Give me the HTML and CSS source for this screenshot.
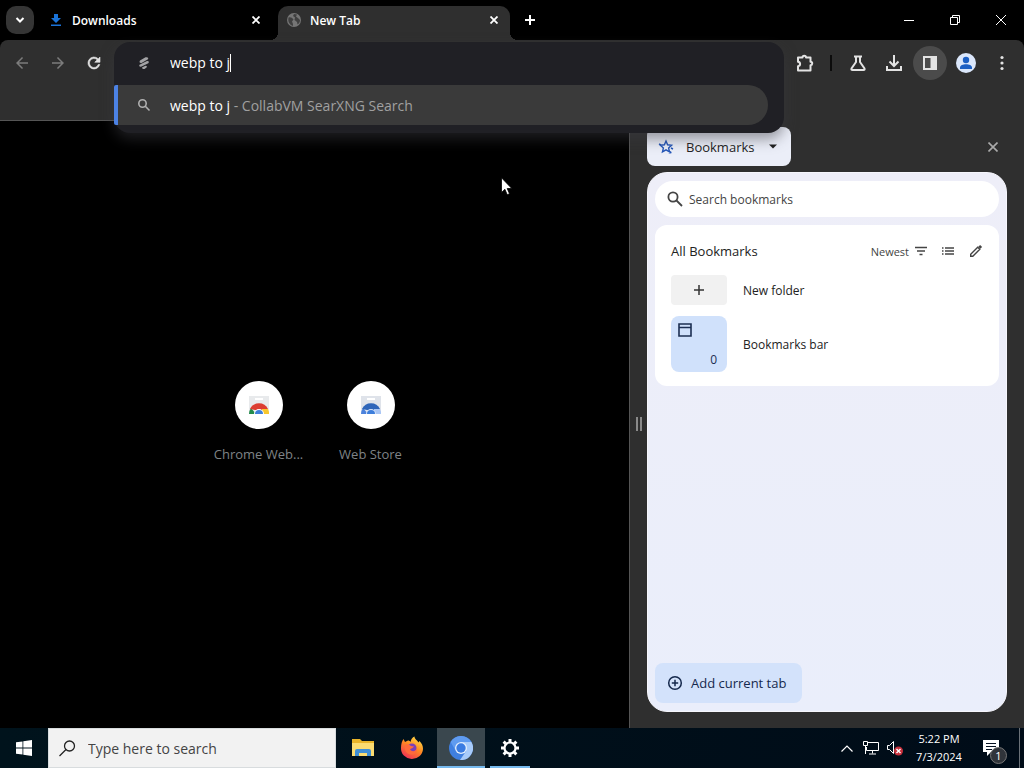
FILE: index.html
```html
<!DOCTYPE html>
<html lang="en">
<head>
    <meta charset="UTF-8">
    <meta name="viewport" content="width=device-width, initial-scale=1.0">
    <title>New Tab</title>
    <link rel="stylesheet" href="styles.css">
</head>
<body>
<div class="desktop">
    <div class="browser">
        <!-- tab strip and window buttons -->
        <header class="tabstrip">
            <button class="tab-search" aria-label="Search tabs">
                <svg width="10" height="10" viewBox="0 0 10 10" fill="none" stroke="#fff" stroke-width="2"><path d="M1.5 3 5 6.5 8.5 3"/></svg>
            </button>
            <div class="tab">
                <svg width="16" height="16" viewBox="0 0 16 16" fill="#1a73d8"><path d="M6 2h4v4h3l-5 5-5-5h3zM3 12.500h10v1.500H3z"/></svg>
                <span class="tab-title">Downloads</span>
                <button class="tab-close" aria-label="Close Downloads"><svg width="8" height="8" viewBox="0 0 8 8" stroke="#fff" stroke-width="1.800"><path d="M.5.5l7 7M7.500.5l-7 7"/></svg></button>
            </div>
            <div class="tab active">
                <svg width="16" height="16" viewBox="0 0 16 16"><circle cx="8" cy="8" r="7" fill="#757575"/><path d="M2.500 5.500C5 5 6 6 7.500 7.500L6 9.500 7 12v2C4 13 1.500 10 2.500 5.500zM8 2l3 .5-1 2 2.500 2L14 8c0 2-1 3.500-2.500 4.500L11 10 8.500 8 9 5.500 7 4z" fill="#404040"/></svg>
                <span class="tab-title">New Tab</span>
                <button class="tab-close" aria-label="Close New Tab"><svg width="8" height="8" viewBox="0 0 8 8" stroke="#fff" stroke-width="1.800"><path d="M.5.5l7 7M7.500.5l-7 7"/></svg></button>
            </div>
            <button class="new-tab" aria-label="New tab">
                <svg width="12" height="12" viewBox="0 0 12 12" stroke="#fff" stroke-width="2"><path d="M6 1v10M1 6h10"/></svg>
            </button>
            <div class="window-buttons">
                <button aria-label="Minimize"><svg width="10" height="10" viewBox="0 0 10 10" stroke="#fff"><path d="M0 5.500h10"/></svg></button>
                <button aria-label="Restore"><svg width="10" height="10" viewBox="0 0 10 10" fill="none" stroke="#fff"><path d="M.5 2.500h7v7h-7zM2.500 2.500v-2h7v7h-2"/></svg></button>
                <button aria-label="Close"><svg width="10" height="10" viewBox="0 0 10 10" stroke="#fff"><path d="M0 0l10 10M10 0L0 10"/></svg></button>
            </div>
        </header>

        <div class="toolbar">
            <button class="tool dim" aria-label="Back"><svg width="18" height="18" viewBox="0 0 24 24"><path d="M20 11H7.830l5.590-5.590L12 4l-8 8 8 8 1.410-1.410L7.830 13H20z"/></svg></button>
            <button class="tool dim" aria-label="Forward"><svg width="18" height="18" viewBox="0 0 24 24"><path d="M4 11h12.170l-5.590-5.590L12 4l8 8-8 8-1.410-1.410L16.170 13H4z"/></svg></button>
            <button class="tool" aria-label="Reload"><svg width="18" height="18" viewBox="0 0 24 24"><path d="M17.650 6.350A8 8 0 1 0 19.730 14h-2.080A6 6 0 1 1 16.220 7.780L13 11h7V4z" stroke="#e3e3e3" stroke-width=".8"/></svg></button>

            <div class="omnibox">
                <div class="omnibox-popup">
                    <div class="omnibox-row">
                        <svg width="16" height="16" viewBox="0 0 16 16" fill="#a2a2a5"><path d="M4 5.500 9.500 2.300c2-.6 3.300.5 2.500 1.900L5.500 8C3.500 8.300 3 6.800 4 5.500zM3.500 9.800 11 6c2-.3 2.300 1.300 1.300 2.200L5 11.800c-1.500.2-2.200-.8-1.500-2zM6 12.500 9.500 10.700c1.500-.1 1.700 1 1 1.800l-2 1.400c-1.500.5-2.500-.3-2.500-1.400z"/></svg>
                        <input class="omnibox-input" type="text" value="webp to j" aria-label="Address and search bar">
                        <span class="caret"></span>
                    </div>
                    <a class="suggestion" href="#">
                        <svg width="16" height="16" viewBox="0 0 16 16" fill="none" stroke="#b0b0b0" stroke-width="1.600"><circle cx="6.500" cy="6.500" r="3.700"/><path d="M9.300 9.300l4.200 4.200"/></svg>
                        <span>webp to j <span class="suggestion-engine">- CollabVM SearXNG Search</span></span>
                    </a>
                </div>
            </div>

            <button class="tool" aria-label="Extensions"><svg class="line" width="20" height="20" viewBox="0 0 20 20"><path d="M4 4.500h4.500C8.500 2 12 2 12 4.500h4.500v4.300c2.300.2 2.300 3.200 0 3.400v5.300H4v-4.300c2.800-.4 2.800-4 0-4.400z" stroke-linejoin="round"/></svg></button>
            <span class="divider"></span>
            <button class="tool" aria-label="Labs"><svg class="line" width="18" height="18" viewBox="0 0 18 18"><path d="M5 2.500h8M7 2.500V8L2.500 14.500Q2 16 3.500 16h11q1.500 0 1-1.500L11 8V2.500"/></svg></button>
            <button class="tool" aria-label="Downloads"><svg class="line" width="18" height="18" viewBox="0 0 18 18"><path d="M9 1v10.500M4.500 7.500 9 12l4.500-4.500M2 12v4h14v-4"/></svg></button>
            <button class="tool pressed" aria-label="Side panel"><svg width="16" height="16" viewBox="0 0 16 16"><path d="M2 2h12v12H2z" fill="none" stroke="#e3e3e3" stroke-width="2"/><path d="M8.500 2H14v12H8.500z"/></svg></button>
            <button class="tool" aria-label="Profile"><svg width="20" height="20" viewBox="0 0 20 20"><circle cx="10" cy="10" r="10" fill="#dbe7fb"/><circle cx="10" cy="7" r="3.200" fill="#1b5fc4"/><path d="M4 14.500c0-4.500 12-4.500 12 0V16H4z" fill="#1b5fc4"/></svg></button>
            <button class="tool" aria-label="Menu"><svg width="16" height="16" viewBox="0 0 16 16"><circle cx="8" cy="2.500" r="1.600"/><circle cx="8" cy="8" r="1.600"/><circle cx="8" cy="13.500" r="1.600"/></svg></button>
        </div>
        <div class="bookmark-bar"></div>

        <div class="content">
            <main class="page">
                <a class="shortcut" href="#">
                    <span class="shortcut-icon"><svg width="24" height="24" viewBox="0 0 24 24"><path d="M2 3h20v18H2z" fill="#e8eaec"/><path d="M8 5h8v2H8z" fill="#fff"/><path d="M2 21a10 10 0 0 1 2-6l5 6z" fill="#238b4b"/><path d="M3 16a10 10 0 0 1 18 0l-4 1H8z" fill="#dc3d31"/><path d="M15 16h6q1.200 2.500 1 5h-7z" fill="#f8c72c"/><path d="M7 21a5 5 0 0 1 10 0z" fill="#fff"/><path d="M8 21a4 4 0 0 1 8 0z" fill="#3d7edb"/></svg></span>
                    <span>Chrome Web...</span>
                </a>
                <a class="shortcut" href="#">
                    <span class="shortcut-icon"><svg width="24" height="24" viewBox="0 0 24 24"><path d="M2 3h20v18H2z" fill="#dfe3ea"/><path d="M8 5h8v2H8z" fill="#fff"/><path d="M2 21a10 10 0 0 1 2-6l5 6z" fill="#4c82dc"/><path d="M3 16a10 10 0 0 1 18 0l-4 1H8z" fill="#2e65b9"/><path d="M15 16h6q1.200 2.500 1 5h-7z" fill="#a9c6f5"/><path d="M7 21a5 5 0 0 1 10 0z" fill="#d6e3f8"/><path d="M8 21a4 4 0 0 1 8 0z" fill="#3d7edb"/></svg></span>
                    <span>Web Store</span>
                </a>
            </main>

            <aside class="side">
                <div class="resize-handle"><i></i><i></i></div>
                <div class="side-body">
                    <div class="side-header">
                        <button class="side-picker">
                            <svg width="16" height="16" viewBox="0 0 16 16" fill="none" stroke="#2456b8" stroke-width="1.400"><path d="M8 2l1.600 3.800 4 .4-3 2.700.9 4L8 10.800l-3.500 2.100.9-4-3-2.700 4-.4zM1 5l2 1M13 9l2 1M12 12v2.500M10.500 13.500h3"/></svg>
                            <span>Bookmarks</span>
                            <svg width="8" height="5" viewBox="0 0 8 5" fill="#1f1f1f"><path d="M0 .5h8l-4 4z"/></svg>
                        </button>
                        <button class="side-close" aria-label="Close side panel"><svg width="10" height="10" viewBox="0 0 10 10" stroke="#aaa" stroke-width="1.600"><path d="M.5.5l9 9M9.500.5l-9 9"/></svg></button>
                    </div>

                    <div class="panel">
                        <label class="search">
                            <svg width="20" height="20" viewBox="0 0 20 20" fill="none" stroke="#444" stroke-width="1.800"><circle cx="8" cy="8" r="4.600"/><path d="M11.500 11.500l5.500 5.500"/></svg>
                            <input type="text" placeholder="Search bookmarks" aria-label="Search bookmarks">
                        </label>

                        <section class="card">
                            <div class="card-header">
                                <h2>All Bookmarks</h2>
                                <button class="sort">Newest
                                    <svg width="12" height="10" viewBox="0 0 12 10" stroke="#444" stroke-width="1.400"><path d="M0 1.500h12M2 5h8M4.500 8.500h3"/></svg>
                                </button>
                                <button class="icon-button" aria-label="List view"><svg width="12" height="10" viewBox="0 0 12 10" stroke="#444" stroke-width="1.300"><path d="M0 2h1.500M0 5h1.500M0 8h1.500M3 2h9M3 5h9M3 8h9"/></svg></button>
                                <button class="icon-button" aria-label="Edit"><svg width="14" height="14" viewBox="0 0 14 14" fill="none" stroke="#444" stroke-width="1.400"><path d="M1.700 12.300v-2.100l7-7 2.100 2.100-7 7z"/><path d="M10.200 1.800l2 2" stroke-width="2.600"/></svg></button>
                            </div>
                            <a class="row" href="#">
                                <span class="tile add"><svg width="10" height="10" viewBox="0 0 10 10" stroke="#333" stroke-width="1.500"><path d="M5 0v10M0 5h10"/></svg></span>
                                <span>New folder</span>
                            </a>
                            <a class="row" href="#">
                                <span class="tile folder">
                                    <svg width="14" height="14" viewBox="0 0 14 14" fill="none" stroke="#1c2f52" stroke-width="1.600"><path d="M1 1h12v12H1zM1 4.500h12"/></svg>
                                    <span class="count">0</span>
                                </span>
                                <span>Bookmarks bar</span>
                            </a>
                        </section>

                        <button class="add-tab">
                            <svg width="16" height="16" viewBox="0 0 16 16" fill="none" stroke="#15294d" stroke-width="1.500"><circle cx="8" cy="8" r="6.300"/><path d="M8 4.800v6.400M4.800 8h6.400"/></svg>
                            <span>Add current tab</span>
                        </button>
                    </div>
                </div>
            </aside>
        </div>
    </div>

    <footer class="taskbar">
        <button class="start" aria-label="Start"><svg width="16" height="16" viewBox="0 0 16 16" fill="#fff"><path d="M0 2.300 6.500 1.400v6.200H0zM7.300 1.300 16 0v7.600H7.300zM0 8.400h6.500v6.200L0 13.700zM7.300 8.400H16V16l-8.700-1.300z"/></svg></button>
        <label class="task-search">
            <svg width="17" height="17" viewBox="0 0 17 17" fill="none" stroke="#222" stroke-width="1.300"><circle cx="10.500" cy="6" r="5"/><path d="M7 9.500.5 16"/></svg>
            <input type="text" placeholder="Type here to search" aria-label="Type here to search">
        </label>
        <button class="app" aria-label="File Explorer"><svg width="22" height="20" viewBox="0 0 22 20"><path d="M0 1h8l2 2h12v15H0z" fill="#e9b429"/><path d="M0 5h22v13H0z" fill="#fbdc71"/><path d="M3 18v-5q0-2 2-2h12q2 0 2 2v5h-4v-3H7v3z" fill="#3f8fd6"/></svg></button>
        <button class="app" aria-label="Firefox">
            <svg width="24" height="24" viewBox="0 0 24 24">
                <defs><linearGradient id="fox" x1=".8" y1="0" x2=".2" y2="1"><stop offset="0" stop-color="#ffe14a"/><stop offset=".45" stop-color="#ff8a22"/><stop offset="1" stop-color="#f02a5a"/></linearGradient></defs>
                <path d="M1 12C1 8 2 5 3.500 3L5 6l3-1.500c1 0 2 .5 2.500 1.500C11 3 12.500 1.500 14.500.5c0 3 3 3.500 4 6L19.500 5C22 7.500 23 10 23 13a11 10.500 0 0 1-22-1z" fill="url(#fox)"/>
                <circle cx="12" cy="12" r="4.500" fill="#7b3fb8"/><path d="M5 9q3-2 6 1l3 .5c-1 2-3 1.500-4 3 2 2.500 5 2 7-.5 0 4-3 6-6 5.500-4 0-7-4-6-9.500z" fill="#ff6a3b"/>
            </svg>
        </button>
        <button class="app open current" aria-label="Chromium"><svg width="24" height="24" viewBox="0 0 24 24"><circle cx="12" cy="12" r="12" fill="#3f7fe0"/><path d="M12 6h10.400A12 12 0 0 1 11 24l6.200-9z" fill="#a8cbfa"/><path d="M1.600 6A12 12 0 0 1 22.400 6H12a6 6 0 0 0-5.200 9z" fill="#5f9bf0"/><circle cx="12" cy="12" r="6" fill="#e4effd"/><circle cx="12" cy="12" r="4.700" fill="#3b7ce2"/></svg></button>
        <button class="app open" aria-label="Settings"><svg width="20" height="20" viewBox="0 0 20 20" fill="none" stroke="#fff"><circle cx="10" cy="10" r="5.500" stroke-width="2.200"/><path d="M10 1v3M10 16v3M1 10h3M16 10h3M3.600 3.600l2.200 2.200M14.200 14.200l2.200 2.200M3.600 16.400l2.200-2.200M14.200 5.800l2.200-2.200" stroke-width="3"/></svg></button>

        <div class="tray">
            <button aria-label="Show hidden icons"><svg width="12" height="7" viewBox="0 0 12 7" fill="none" stroke="#fff" stroke-width="1.200"><path d="M.5 6.500 6 1l5.500 5.500"/></svg></button>
            <button aria-label="Network"><svg width="16" height="14" viewBox="0 0 16 14" fill="none" stroke="#fff"><path d="M5 1.500h10.500v8H3.500V6M9.500 9.500v3M6 13h7M.5.500h4v4h-4zM2.500 4.500V13"/></svg></button>
            <button aria-label="Volume muted"><svg width="18" height="16" viewBox="0 0 18 16"><path d="M1.500 5.500h2l4-4v12l-4-4h-2z" fill="none" stroke="#fff"/><circle cx="12.500" cy="11" r="4.500" fill="#c7303c"/><path d="M10.500 9l4 4M14.500 9l-4 4" stroke="#fff" stroke-width="1.400"/></svg></button>
            <div class="clock"><span>5:22 PM</span><span>7/3/2024</span></div>
            <button class="notifications" aria-label="Notifications">
                <svg width="16" height="16" viewBox="0 0 16 16"><path d="M0 0h16v12H8l-4 4v-4H0z" fill="#fff"/><path d="M3 3.500h10M3 6.500h10M3 9.500h6" stroke="#061222"/></svg>
                <span class="badge">1</span>
            </button>
            <span class="show-desktop"></span>
        </div>
    </footer>

    <svg class="pointer" width="12" height="19" viewBox="0 0 12 19"><path d="M.5.8v14.700l3.400-3.200 2.300 5.400 2.300-1-2.300-5.200h4.600z" fill="#fff" stroke="#000" stroke-width=".8"/></svg>
</div>
</body>
</html>
```
FILE: styles.css
```css
* {
    box-sizing: border-box;
}
body {
    margin: 0;
    background: #000;
    font-family: "Open Sans", "Noto Sans", sans-serif;
    font-size: 13px;
    color: #fff;
}
button {
    display: flex;
    align-items: center;
    justify-content: center;
    padding: 0;
    border: 0;
    background: none;
    color: inherit;
    font: inherit;
}
input {
    min-width: 0;
    padding: 0;
    border: 0;
    outline: 0;
    background: none;
    color: inherit;
    font: inherit;
}
a {
    color: inherit;
    text-decoration: none;
}
svg {
    flex-shrink: 0;
}
.desktop {
    position: relative;
    display: flex;
    flex-direction: column;
    height: 100vh;
}
.browser {
    flex: 1;
    display: flex;
    flex-direction: column;
    min-height: 0;
}

/* tab strip */
.tabstrip {
    display: flex;
    align-items: center;
    height: 40px;
    padding-left: 6px;
    gap: 6px;
}
.tab-search {
    width: 28px;
    height: 28px;
    border-radius: 10px;
    background: #353535;
}
.tab {
    position: relative;
    flex: 0 1 232px;
    display: flex;
    align-items: center;
    gap: 8px;
    height: 28px;
    padding: 0 8px;
    font-size: 12px;
    font-weight: 600;
}
.tab.active {
    align-self: flex-end;
    height: 34px;
    padding-bottom: 6px;
    border-radius: 10px 10px 0 0;
    background: #2f2f2f;
}
/* the outward curves at the foot of the active tab */
.tab.active::before,
.tab.active::after {
    content: "";
    position: absolute;
    bottom: 0;
    width: 8px;
    height: 8px;
}
.tab.active::before {
    left: -8px;
    background: radial-gradient(circle at 0 0, transparent 8px, #2f2f2f 8px);
}
.tab.active::after {
    right: -8px;
    background: radial-gradient(circle at 100% 0, transparent 8px, #2f2f2f 8px);
}
.tab-title {
    flex: 1;
}
.tab-close {
    width: 16px;
    height: 16px;
}
.new-tab {
    width: 28px;
    height: 28px;
}
.window-buttons {
    display: flex;
    align-self: stretch;
    margin-left: auto;
}
.window-buttons button {
    width: 46px;
}

/* toolbar */
.toolbar {
    display: flex;
    align-items: center;
    height: 46px;
    padding: 0 4px;
    border-radius: 8px 8px 0 0;
    background: #2f2f2f;
}
.tool {
    width: 36px;
    height: 34px;
    fill: #e3e3e3;
}
.tool.dim {
    fill: #7c7c7c;
}
.tool.pressed {
    width: 34px;
    margin: 0 1px;
    border-radius: 50%;
    background: #4b4b4b;
}
.line {
    fill: none;
    stroke: #e3e3e3;
    stroke-width: 2;
}
.divider {
    width: 2px;
    height: 16px;
    margin: 0 8px;
    background: #0c0c0c;
}
.omnibox {
    position: relative;
    z-index: 2;
    flex: 1;
    align-self: stretch;
    margin: 0 2px;
}
/* covers the bookmark bar and the top of the page */
.omnibox-popup {
    position: absolute;
    top: 2px;
    left: 0;
    right: 0;
    padding-bottom: 8px;
    border-radius: 16px;
    background: #202025;
    box-shadow: 0 6px 14px rgba(60, 60, 65, 0.5);
    font-size: 14px;
}
.omnibox-row,
.suggestion {
    display: flex;
    align-items: center;
    gap: 18px;
    padding-left: 22px;
}
.omnibox-row {
    height: 43px;
    padding-bottom: 2px;
}
.omnibox-input {
    field-sizing: content;
}
.caret {
    width: 1px;
    height: 18px;
    margin-left: -18px;
    background: #fff;
}
.suggestion {
    height: 40px;
    margin-right: 16px;
    padding-left: 18px;
    border-left: 4px solid #4c82e4;
    border-radius: 2px 20px 20px 2px;
    background: #3a3a3a;
}
.suggestion-engine {
    color: #a0a0a0;
}
.bookmark-bar {
    height: 35px;
    background: #2f2f2f;
}

/* page and side panel */
.content {
    flex: 1;
    display: flex;
    min-height: 0;
}
.page {
    flex: 1;
    display: flex;
    align-items: center;
    justify-content: center;
    margin-top: -1px;
    padding-bottom: 6px;
    border-top: 1px solid #555;
}
.shortcut {
    display: flex;
    flex-direction: column;
    align-items: center;
    gap: 16px;
    width: 112px;
    color: #7f8386;
    white-space: nowrap;
}
.shortcut-icon {
    display: flex;
    align-items: center;
    justify-content: center;
    width: 48px;
    height: 48px;
    border-radius: 50%;
    background: #fff;
}
.side {
    display: flex;
    width: 395px;
    padding: 6px 17px 16px 0;
    border-left: 1px solid #555;
    background: #2f2f2f;
}
.resize-handle {
    display: flex;
    align-items: center;
    justify-content: center;
    gap: 2px;
    width: 17px;
    padding-top: 8px;
}
.resize-handle i {
    width: 2px;
    height: 14px;
    background: #8a8a8a;
}
.side-body {
    flex: 1;
    display: flex;
    flex-direction: column;
    gap: 6px;
}
.side-header {
    display: flex;
    align-items: center;
    justify-content: space-between;
    padding-right: 7px;
}
.side-picker {
    gap: 12px;
    height: 39px;
    padding: 0 14px 0 11px;
    border-radius: 8px;
    background: #ebeef8;
    color: #222;
    font-weight: 500;
}
.side-picker svg:last-child {
    margin-left: 3px;
}
.side-close {
    width: 14px;
    height: 14px;
}
.panel {
    flex: 1;
    display: flex;
    flex-direction: column;
    align-items: stretch;
    gap: 8px;
    padding: 8px 7px;
    border: 1px solid #f6f6fc;
    border-radius: 20px;
    background: linear-gradient(#eeeef8, #eaeefb);
    color: #222;
}
.search {
    display: flex;
    align-items: center;
    gap: 4px;
    height: 36px;
    padding: 0 10px;
    border-radius: 18px;
    background: #fff;
    font-size: 12px;
}
.search input {
    flex: 1;
}
.search input::placeholder {
    color: #444;
}
.card {
    padding: 14px 16px;
    border-radius: 12px;
    background: #fff;
    font-size: 12px;
}
.card-header {
    display: flex;
    align-items: center;
    gap: 14px;
    height: 24px;
    margin-bottom: 12px;
}
.card-header h2 {
    flex: 1;
    margin: 0;
    font-size: 13px;
    font-weight: 500;
}
.sort {
    gap: 6px;
    color: #444;
    font-size: 11px;
}
.icon-button {
    min-width: 14px;
}
.row {
    display: flex;
    align-items: center;
    gap: 16px;
}
.row + .row {
    margin-top: 11px;
}
.tile {
    display: flex;
    width: 56px;
}
.tile.add {
    align-items: center;
    justify-content: center;
    height: 30px;
    border-radius: 4px;
    background: #f1f1f1;
}
.tile.folder {
    flex-direction: column;
    justify-content: space-between;
    height: 56px;
    padding: 7px 10px 4px 7px;
    border-radius: 8px;
    background: #d0e1fb;
    color: #1c2f52;
}
.count {
    align-self: flex-end;
}
.add-tab {
    gap: 8px;
    align-self: flex-start;
    height: 40px;
    margin-top: auto;
    padding: 0 16px 0 12px;
    border-radius: 8px;
    background: #d3e2fb;
    color: #15294d;
    font-weight: 500;
}

/* taskbar */
.taskbar {
    display: flex;
    height: 40px;
    background: linear-gradient(90deg, #00131c, #000c18);
}
.start {
    width: 48px;
}
.task-search {
    display: flex;
    align-items: center;
    gap: 12px;
    width: 288px;
    margin-right: 3px;
    padding: 0 10px;
    border: 1px solid #d8dcde;
    background: #f2f2f2;
    font-size: 14px;
}
.task-search input {
    flex: 1;
}
.task-search input::placeholder {
    color: #444;
}
.app {
    width: 48px;
    margin-right: 1px;
}
.app.open {
    background: linear-gradient(#76b9ed, #76b9ed) center bottom / 40px 2px no-repeat;
}
.app.current {
    background-color: #3a474e;
    background-size: 100% 2px;
}
.tray {
    display: flex;
    align-items: center;
    margin-left: auto;
    font-size: 12px;
}
.tray button {
    width: 24px;
    height: 40px;
}
.clock {
    display: flex;
    flex-direction: column;
    align-items: center;
    width: 64px;
    font-size: 11px;
    line-height: 18px;
}
.tray .notifications {
    position: relative;
    width: 44px;
    margin-right: 4px;
    padding-right: 4px;
}
.badge {
    position: absolute;
    right: 8px;
    bottom: 4px;
    width: 17px;
    height: 17px;
    border: 1px solid #777;
    border-radius: 50%;
    background: #30343a;
    font-size: 11px;
    line-height: 15px;
}
.show-desktop {
    width: 5px;
    height: 40px;
    border-left: 1px solid #6a7178;
}

.pointer {
    position: absolute;
    top: 177px;
    left: 501px;
}
```
